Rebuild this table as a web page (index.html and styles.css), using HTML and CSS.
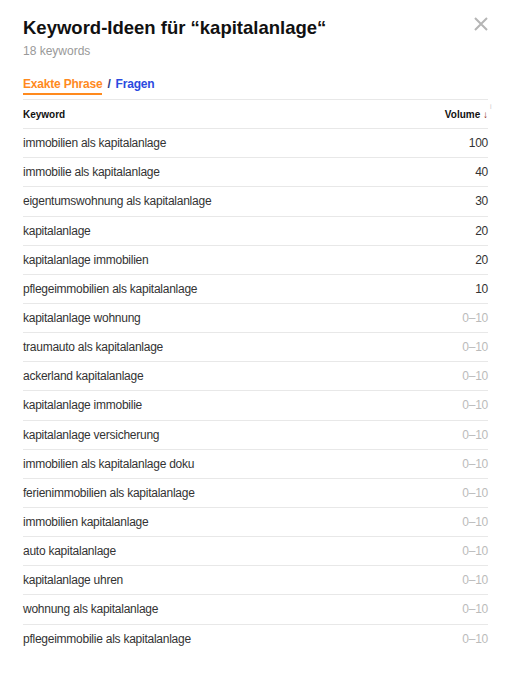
FILE: index.html
```html
<!DOCTYPE html>
<html lang="de">
<head>
    <meta charset="UTF-8">
    <title>Keyword-Ideen</title>
    <link rel="stylesheet" href="styles.css">
</head>
<body>

<div class="modal">
    <header class="modal-head">
        <div>
            <h1>Keyword-Ideen für “kapitalanlage“</h1>
            <p class="count">18 keywords</p>
        </div>
        <button class="close" aria-label="Schließen">
            <svg width="14" height="14" viewBox="0 0 14 14"><path d="M1 1L13 13M13 1L1 13" stroke="#b5b5b5" stroke-width="2"/></svg>
        </button>
    </header>

    <nav class="tabs">
        <a href="#" class="tab active">Exakte Phrase</a>
        <span class="sep">/</span>
        <a href="#" class="tab">Fragen</a>
    </nav>

    <table class="keywords">
        <thead>
            <tr>
                <th>Keyword</th>
                <th class="vol">Volume <span class="arrow">↓</span><span class="info">i</span></th>
            </tr>
        </thead>
        <tbody>
            <tr><td>immobilien als kapitalanlage</td><td class="vol">100</td></tr>
            <tr><td>immobilie als kapitalanlage</td><td class="vol">40</td></tr>
            <tr><td>eigentumswohnung als kapitalanlage</td><td class="vol">30</td></tr>
            <tr><td>kapitalanlage</td><td class="vol">20</td></tr>
            <tr><td>kapitalanlage immobilien</td><td class="vol">20</td></tr>
            <tr><td>pflegeimmobilien als kapitalanlage</td><td class="vol">10</td></tr>
            <tr><td>kapitalanlage wohnung</td><td class="vol low">0–10</td></tr>
            <tr><td>traumauto als kapitalanlage</td><td class="vol low">0–10</td></tr>
            <tr><td>ackerland kapitalanlage</td><td class="vol low">0–10</td></tr>
            <tr><td>kapitalanlage immobilie</td><td class="vol low">0–10</td></tr>
            <tr><td>kapitalanlage versicherung</td><td class="vol low">0–10</td></tr>
            <tr><td>immobilien als kapitalanlage doku</td><td class="vol low">0–10</td></tr>
            <tr><td>ferienimmobilien als kapitalanlage</td><td class="vol low">0–10</td></tr>
            <tr><td>immobilien kapitalanlage</td><td class="vol low">0–10</td></tr>
            <tr><td>auto kapitalanlage</td><td class="vol low">0–10</td></tr>
            <tr><td>kapitalanlage uhren</td><td class="vol low">0–10</td></tr>
            <tr><td>wohnung als kapitalanlage</td><td class="vol low">0–10</td></tr>
            <tr><td>pflegeimmobilie als kapitalanlage</td><td class="vol low">0–10</td></tr>
        </tbody>
    </table>
</div>

</body>
</html>
```

FILE: styles.css
```css
* {
    box-sizing: border-box;
}
body {
    margin: 0;
    background: #fff;
    font-family: "Liberation Sans", Arial, sans-serif;
    color: #333;
}
.modal {
    padding: 16px 22px 0 23px;
}
.modal-head {
    display: flex;
    justify-content: space-between;
    align-items: flex-start;
}
h1 {
    margin: 0;
    font-size: 18.5px;
    line-height: 24px;
    font-weight: bold;
    color: #111;
}
.count {
    margin: 3px 0 0;
    font-size: 12px;
    line-height: 16px;
    color: #999;
}
.close {
    background: none;
    border: 0;
    padding: 0;
    margin-top: 1px;
    width: 14px;
    height: 14px;
    cursor: pointer;
}
.close svg {
    display: block;
}
.tabs {
    display: flex;
    gap: 5px;
    margin-top: 17px;
    padding-bottom: 4px;
    font-size: 12px;
    font-weight: bold;
    line-height: 16px;
    letter-spacing: -0.2px;
}
.tab {
    text-decoration: none;
    color: #2a4ae0;
    padding-bottom: 1px;
}
.tab.active {
    color: #ff8a1e;
    border-bottom: 2px solid #ff8a1e;
}
.sep {
    color: #2a3a80;
}
.keywords {
    width: 100%;
    border-collapse: collapse;
    font-size: 12px;
    letter-spacing: -0.25px;
}
.keywords th,
.keywords td {
    border-top: 1px solid #e8e8e8;
    height: 29.15px;
    padding: 0;
    text-align: left;
}
.keywords th {
    font-size: 10px;
    font-weight: bold;
    color: #111;
    letter-spacing: 0;
}
.keywords td {
    color: #333;
}
.keywords .vol {
    text-align: right;
}
.keywords td.low {
    color: #bbb;
}
.arrow {
    color: #8b2a10;
    font-size: 10px;
}
.info {
    position: absolute;
    margin: -6px 0 0 2px;
    font-size: 7px;
    font-weight: normal;
    color: #ccc;
}
```
